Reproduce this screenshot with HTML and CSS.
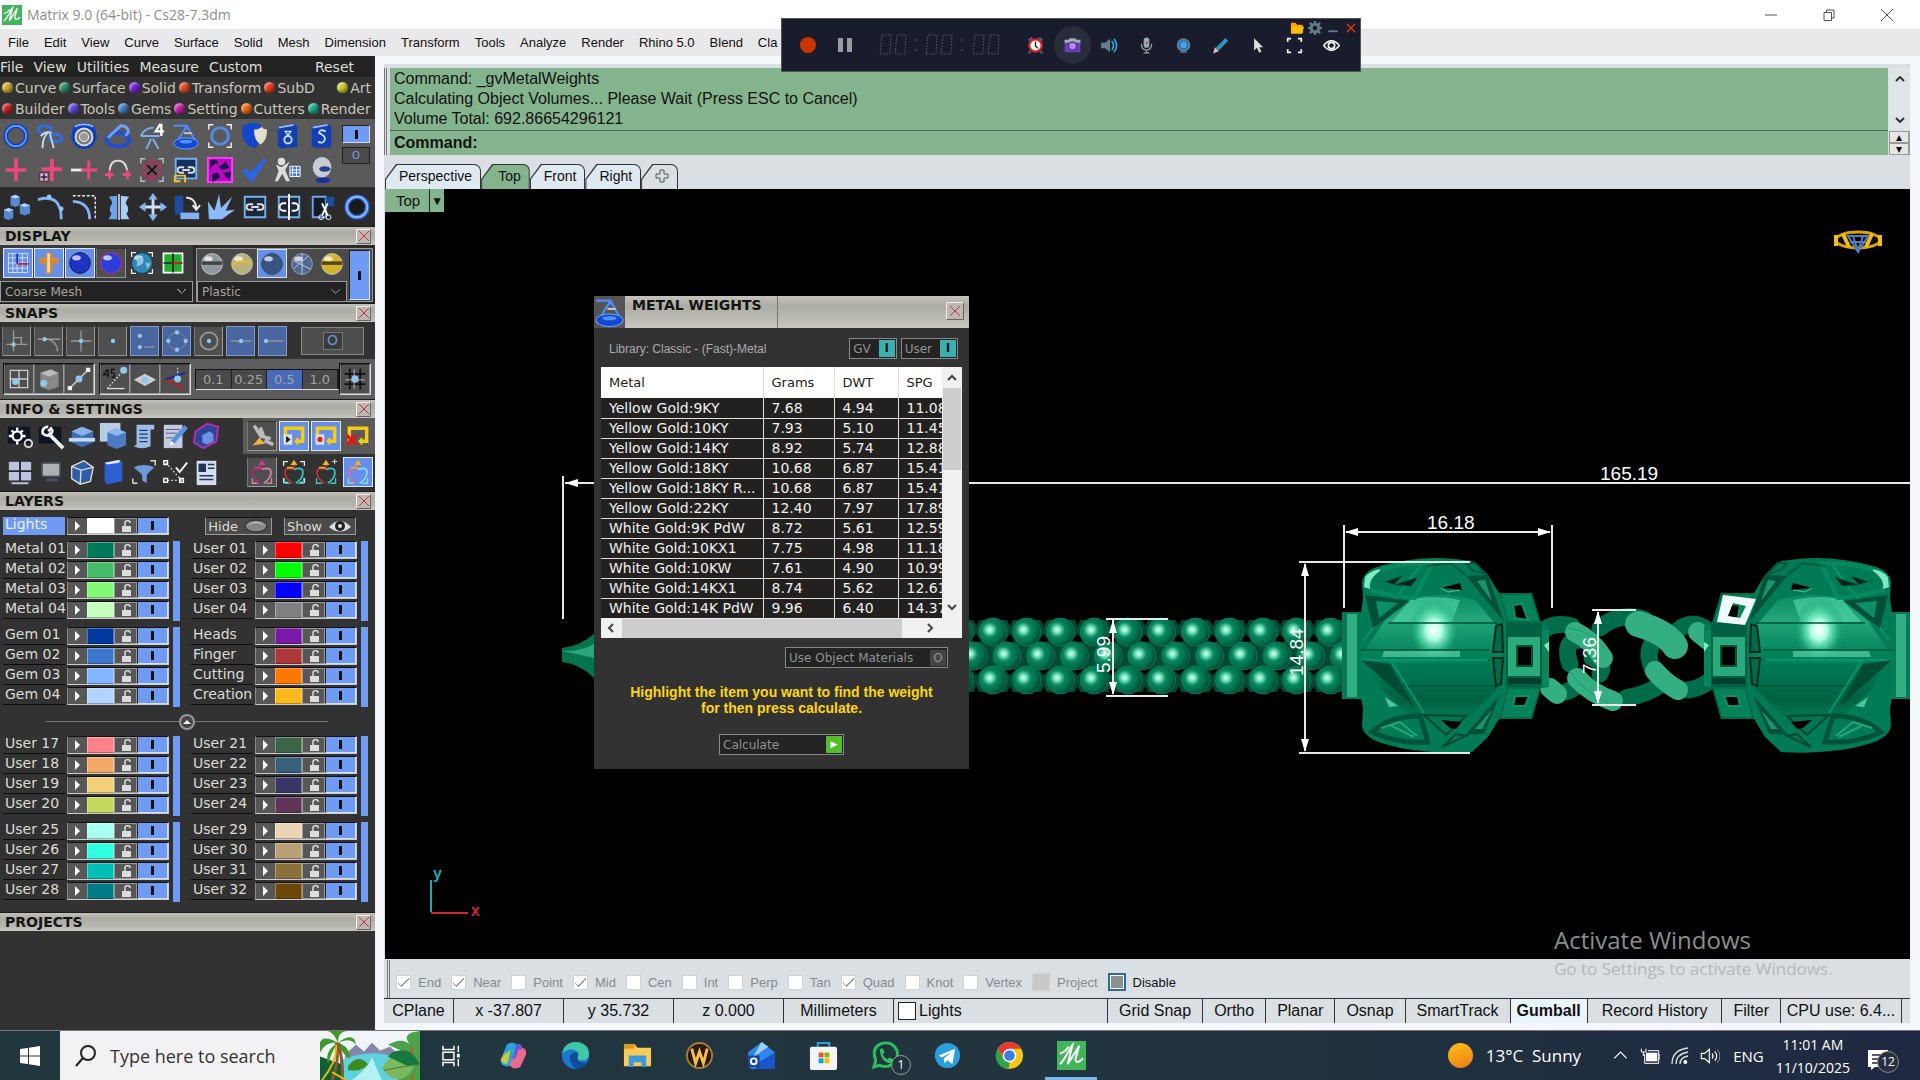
FILE: index.html
```html
<!DOCTYPE html>
<html lang="en">
<head>
    <meta charset="UTF-8">
    <meta name="viewport" content="width=device-width, initial-scale=1.0">
    <title>Matrix 9.0 (64-bit) - Cs28-7.3dm</title>
    <link rel="stylesheet" href="styles.css">
</head>
<body>
    <header class="titlebar">
        <span class="icon app-icon" data-icon="matrix"></span>
        <span class="title">Matrix 9.0 (64-bit) - Cs28-7.3dm</span>
        <div class="window-buttons">
            <button aria-label="Minimize"><svg viewBox="0 0 12 12"><path d="M0 6h12"/></svg></button>
            <button aria-label="Restore"><svg viewBox="0 0 12 12"><path d="M1 3.500h7.500v8H1zM3.500 3V1H11v8H9"/></svg></button>
            <button aria-label="Close"><svg viewBox="0 0 12 12"><path d="M0 0l12 12M12 0L0 12"/></svg></button>
        </div>
    </header>

    <nav class="menubar">
        <a href="#">File</a><a href="#">Edit</a><a href="#">View</a><a href="#">Curve</a><a href="#">Surface</a>
        <a href="#">Solid</a><a href="#">Mesh</a><a href="#">Dimension</a><a href="#">Transform</a><a href="#">Tools</a>
        <a href="#">Analyze</a><a href="#">Render</a><a href="#">Rhino 5.0</a><a href="#">Blend</a><a href="#">Cla</a>
    </nav>

    <!-- Screen recorder, floats over the menu bar -->
    <div class="recorder">
        <div class="rec-main">
            <button class="rec-dot" aria-label="Record"></button>
            <button class="rec-pause" aria-label="Pause"></button>
            <svg class="rec-time" viewBox="0 0 122 22" role="img" aria-label="00:00:00">
                <g fill="none" stroke="#4b4e5c" stroke-width="1" stroke-dasharray="2 1">
                    <path d="M3 1h9l-1 19H1zM18 1h9l-1 19H16zM49 1h9l-1 19H47zM64 1h9l-1 19H62zM96 1h9l-1 19H94zM111 1h9l-1 19h-10z"/>
                </g>
                <path d="M36 5h2v2h-2zM36 15h2v2h-2zM82 5h2v2h-2zM82 15h2v2h-2z" fill="#3a3d4c"/>
            </svg>
            <div class="rec-tools" data-icons="alarm camera speaker mic webcam pencil cursor frame eye"></div>
        </div>
        <div class="rec-corner" data-icons="folder gear minus cross"></div>
    </div>

    <div class="workspace">
        <aside class="sidebar">
            <nav class="side-menu">
                <a href="#">File</a><a href="#">View</a><a href="#">Utilities</a><a href="#">Measure</a><a href="#">Custom</a><a href="#" class="reset">Reset</a>
            </nav>
            <div class="categories" id="categories"></div>

            <div class="tools-top">
                <div class="tool-grid" data-icons="ring rings band swirl lines4 scale ringframe shield book bookS plus plusbox minusplus arch target linkbox pattern check person head"></div>
                <div class="stack">
                    <button class="on-switch" aria-label="On"></button>
                    <button class="off-switch" aria-label="Off">O</button>
                </div>
            </div>
            <div class="tools-dark" data-icons="cubes curvept offset mirror move rotate burst linkbox2 breaklink cut ring2"></div>

            <h2 class="panel-title">DISPLAY <button class="close" aria-label="Close display"></button></h2>
            <section class="display">
                <div class="display-left">
                    <div class="strip" data-icons="grid*on cross3d*on sphere*on sphereP*up sphereW gridG"></div>
                    <select aria-label="Mesh quality"><option>Coarse Mesh</option></select>
                </div>
                <div class="display-right">
                    <div>
                        <div class="strip" data-icons="ballS ballY ballB*on ballW ballG"></div>
                        <select aria-label="Material"><option>Plastic</option></select>
                    </div>
                    <button class="on-switch tall" aria-label="Material on"></button>
                </div>
            </section>

            <h2 class="panel-title">SNAPS <button class="close" aria-label="Close snaps"></button></h2>
            <section class="snaps">
                <div class="snap-row">
                    <div class="strip faded" data-icons="s1*up s2*up s3*up s4*up s5*on s6*on s7*up s8*on s9*on"></div>
                    <button class="snap-off" aria-label="Snaps off"><span>O</span></button>
                </div>
                <div class="snap-row gray">
                    <div class="strip sunk" data-icons="t1*up t2*up t3*up"></div>
                    <div class="strip sunk" data-icons="t4*up t5*up t6*up"></div>
                    <div class="steps"><button>0.1</button><button>0.25</button><button class="active">0.5</button><button>1.0</button></div>
                    <div class="strip sunk last" data-icons="hash*up"></div>
                </div>
            </section>

            <h2 class="panel-title">INFO &amp; SETTINGS <button class="close" aria-label="Close info"></button></h2>
            <section class="info">
                <div class="info-left" data-icons="gears wrench boxline boxdoc scroll notepad cubeP panes monitor cubeW bookB filter nodes report"></div>
                <div class="info-right">
                    <div class="strip lit" data-icons="brush*up play*on rec*on delx"></div>
                    <div class="strip" data-icons="gum1*up gum2 gum3 gum4*on"></div>
                </div>
            </section>

            <h2 class="panel-title">LAYERS <button class="close" aria-label="Close layers"></button></h2>
            <section class="layers">
                <div class="lights-row">
                    <div id="lights"></div>
                    <div class="hide-show">
                        <button>Hide <svg viewBox="0 0 24 14"><ellipse cx="12" cy="7" rx="11" ry="6" fill="#858585" stroke="#222"/><path d="M5 6q7-5 14 0" stroke="#ccc" fill="none"/></svg></button>
                        <button>Show <svg viewBox="0 0 24 14"><path d="M1 8Q12-4 23 8Q12 17 1 8z" fill="#ddd"/><circle cx="12" cy="7" r="5" fill="#222"/><circle cx="12" cy="7" r="2" fill="#ddd"/></svg></button>
                    </div>
                </div>
                <div class="layer-groups" id="layers-top"></div>
                <div class="layer-divider"><button aria-label="Collapse"></button></div>
                <div class="layer-groups" id="layers-bottom"></div>
            </section>

            <h2 class="panel-title">PROJECTS <button class="close" aria-label="Close projects"></button></h2>
        </aside>

        <main class="content">
            <section class="command">
                <div class="command-text">
                    <div class="history">
                        <p>Command: _gvMetalWeights</p>
                        <p>Calculating Object Volumes... Please Wait (Press ESC to Cancel)</p>
                        <p>Volume Total: 692.86654296121</p>
                    </div>
                    <label class="prompt"><b>Command:</b> <input type="text"></label>
                </div>
                <div class="command-scroll">
                    <div><svg viewBox="0 0 10 6"><path d="M1 5l4-4 4 4"/></svg><svg viewBox="0 0 10 6"><path d="M1 1l4 4 4-4"/></svg></div>
                    <div class="spin"><button aria-label="Up">▴</button><button aria-label="Down">▾</button></div>
                </div>
            </section>

            <nav class="tabs">
                <button>Perspective</button><button class="active">Top</button><button>Front</button><button>Right</button><button class="add" aria-label="Add viewport"><svg viewBox="0 0 14 14"><path d="M5 1h4v4h4v4H9v4H5V9H1V5h4z"/></svg></button>
            </nav>

            <section class="viewport">
                <svg class="scene" viewBox="385 189 1525 770" preserveAspectRatio="xMinYMin slice">
                    <defs>
                        <radialGradient id="bead" cx=".38" cy=".42" r=".64">
                            <stop offset="0" stop-color="#e2fff5"/><stop offset=".16" stop-color="#7eebc4"/>
                            <stop offset=".42" stop-color="#08865e"/><stop offset=".75" stop-color="#006b4a"/><stop offset="1" stop-color="#00402c"/>
                        </radialGradient>
                        <linearGradient id="ball" x1="0" x2="0" y1="0" y2="1">
                            <stop offset="0" stop-color="#0a8a61"/><stop offset=".2" stop-color="#25a57a"/><stop offset=".5" stop-color="#008059"/>
                            <stop offset=".85" stop-color="#006243"/><stop offset="1" stop-color="#007a54"/>
                        </linearGradient>
                        <radialGradient id="glow"><stop offset="0" stop-color="#fff"/><stop offset=".3" stop-color="#b4ffe6"/><stop offset=".6" stop-color="#4fd8a8" stop-opacity=".7"/><stop offset="1" stop-color="#008a5e" stop-opacity="0"/></radialGradient>
                        <g id="capsule">
                            <path d="M1361 613H1370V700H1361z" fill="#014b33"/>
                            <path d="M1363 598L1362 582Q1364 570 1380 566Q1420 555 1455 559L1472 561L1488 575L1499 593H1532L1541 623L1549 626V687L1541 688L1532 719H1499L1488 737L1472 752Q1420 755 1385 744Q1364 738 1362 726L1363 708L1361 698V613z" fill="#017b55"/>
                            <path d="M1410 599Q1440 590 1475 600L1499 628L1502 656L1497 690L1470 716Q1440 722 1410 716L1382 690L1361 656L1384 622z" fill="url(#ball)"/>
                            <path d="M1410 600Q1430 594 1460 600L1452 622H1392z" fill="#5be3b2" opacity=".55"/>
                            <ellipse cx="1434" cy="630" rx="26" ry="32" fill="url(#glow)"/>
                            <path d="M1384 651H1460V657H1382z" fill="#79eec6" opacity=".5"/>
                            <g fill="none" stroke="#00543a" stroke-width="1.500">
                                <path d="M1361 650H1490M1361 660H1490M1388 623H1497M1390 686H1496"/>
                            </g>
                            <path d="M1361 660H1488L1391 661L1424 713M1424 561L1364 640" fill="none" stroke="#07946a" stroke-width="2"/>
                            <path d="M1361 660L1390 664L1414 707z" fill="#014a34"/>
                            <path d="M1365 595L1410 601L1373 628z" fill="#014f38"/><path d="M1376 601L1398 603L1379 618z" fill="#0a8f66"/>
                            <path d="M1379 580L1384 582 1402 576 1394 585 1418 577 1411 586 1396 585z" fill="#00271b"/>
                            <path d="M1365 577Q1372 569 1383 569Q1368 578 1370 589L1364 587z" fill="#7cebc4"/>
                            <path d="M1380 570Q1406 562 1432 564L1415 598Q1390 596 1370 590" fill="none" stroke="#05895f" stroke-width="4"/>
                            <path d="M1466 576L1488 575L1504 622L1495 611z" fill="#015239"/><path d="M1477 581L1485 580 1492 601z" fill="#17966e"/>
                            <path d="M1441 588L1460 583 1462 590z" fill="#000"/><path d="M1441 588L1448 592 1460 590" stroke="#47c79c" fill="none"/>
                            <path d="M1427 566L1450 563 1466 575M1466 563L1475 563 1486 574 1472 570z" stroke="#01583e" fill="none" stroke-width="2"/>
                            <path d="M1496 626L1502 624 1503 652 1493 652zM1493 658L1503 658 1501 684 1496 686z" fill="#02694a" stroke="#002b1d" stroke-width="2"/>
                            <path d="M1372 732Q1390 716 1420 716L1428 742Q1397 744 1372 732z" fill="none" stroke="#015239" stroke-width="5"/>
                            <path d="M1381 728L1400 722L1417 736M1390 725L1414 737" stroke="#20a67a" fill="none" stroke-width="2"/>
                            <path d="M1424 715L1466 716L1446 735zM1442 747L1456 734 1466 736z" fill="#027552" stroke="#00482f" stroke-width="2"/>
                            <path d="M1441 720L1462 722 1456 729 1450 728z" fill="#000"/>
                            <path d="M1500 695L1465 735L1484 734z" fill="#015239"/><path d="M1492 710L1475 729L1482 729z" fill="#17966e"/>
                            <path d="M1385 697L1389 707L1398 706z" fill="#48c99c"/>
                            <path d="M1500 594H1531L1540 622H1508zM1508 688H1540L1531 718H1500z" fill="#058259" stroke="#015b40"/>
                            <path d="M1513 605L1522 604 1528 620 1515 618zM1515 696L1529 696 1525 706 1513 706z" fill="#000" stroke="#0a9068" stroke-width="2"/>
                            <path d="M1506 623H1542V687H1506z" fill="#026143"/><path d="M1508 637H1540V676H1508z" fill="#2aa97c"/>
                            <path d="M1517 646H1532V666H1517z" fill="#000" stroke="#015239" stroke-width="2"/>
                            <path d="M1542 630H1549V686H1542z" fill="#07865d"/><path d="M1544 645L1549 642V652z" fill="#79eec6"/>
                            <path d="M1508 678H1541V684H1508z" fill="#00402c"/>
                            <path d="M1342 612H1361V699H1342z" fill="#057a55"/><path d="M1347 614H1357V697H1347z" fill="#32b083"/>
                        </g>
                        <g id="arrow"><path d="M0 0L-4 13H4z" fill="#fff"/></g>
                    </defs>

                    <!-- Bracelet -->
                    <path d="M562 648Q580 646 594 634V678Q580 664 562 662z" fill="#04744f"/>
                    <path d="M562 651Q580 652 594 644V658z" fill="#2ba67c"/>
                    <g id="beads"></g>
                    <g fill="none" stroke-linecap="round">
                        <path d="M1545 629Q1556 622 1572 626M1600 628Q1618 612 1644 619M1570 664Q1562 640 1580 640M1652 668Q1644 648 1658 638M1674 634Q1688 618 1705 628M1626 698Q1650 694 1664 682M1592 658Q1606 664 1600 674M1688 690Q1700 688 1708 682M1566 692Q1572 690 1576 686" stroke="#006c4a" stroke-width="17"/>
                        <path d="M1575 632Q1592 640 1603 658M1577 678Q1592 694 1613 701M1655 671Q1664 682 1678 690M1698 632L1708 640M1550 688L1557 694" stroke="#33af82" stroke-width="20"/>
                        <path d="M1638 624Q1666 632 1675 646" stroke="#33af82" stroke-width="26"/>
                        <path d="M1568 628Q1590 630 1604 648M1570 672Q1584 692 1608 703" stroke="#1d9c70" stroke-width="1"/>
                    </g>
                    <use href="#capsule"/>
                    <use href="#capsule" transform="translate(3253 0) scale(-1 1)"/>
                    <path d="M1723 595L1756 599 1745 625 1717 622zM1733 603L1728 616 1740 618 1746 606z" fill="#effffa" fill-rule="evenodd"/>

                    <!-- Dimensions -->
                    <g stroke="#e8e8e8" stroke-width="2" fill="none">
                        <path d="M563 476V619M565 483H1910M1344 525V608M1552 525V608M1346 532H1550M1299 562H1470M1299 753H1470M1305 564V751M1106 619H1168M1106 696H1168M1113 620V694M1592 610H1636M1592 705H1636M1598 612V703"/>
                    </g>
                    <use href="#arrow" transform="translate(565 483) rotate(-90)"/>
                    <use href="#arrow" transform="translate(1345 532) rotate(-90)"/>
                    <use href="#arrow" transform="translate(1551 532) rotate(90)"/>
                    <use href="#arrow" transform="translate(1305 563)"/><use href="#arrow" transform="translate(1305 752) rotate(180)"/>
                    <use href="#arrow" transform="translate(1113 620)"/><use href="#arrow" transform="translate(1113 695) rotate(180)"/>
                    <use href="#arrow" transform="translate(1598 611)"/><use href="#arrow" transform="translate(1598 704) rotate(180)"/>
                    <g class="dims">
                        <text x="1600" y="480">165.19</text>
                        <text x="1427" y="529">16.18</text>
                        <text transform="translate(1110 673) rotate(-90)">5.99</text>
                        <text transform="translate(1303 676) rotate(-90)">14.84</text>
                        <text transform="translate(1596 674) rotate(-90)">7.36</text>
                    </g>

                    <!-- World axes -->
                    <path d="M431 880V912" stroke="#1fa7b5" stroke-width="2"/><path d="M431 913H468" stroke="#c92a2a" stroke-width="2"/>
                    <text class="axis" x="433" y="879" fill="#1fa7b5">y</text>
                    <text class="axis" x="471" y="916" fill="#c92a2a">x</text>

                    <!-- Ring finger gizmo -->
                    <g fill="none" stroke-width="3">
                        <ellipse cx="1858" cy="240" rx="22" ry="8" stroke="#d9a400"/>
                        <path d="M1836 235v11M1880 235v11M1843 234l6 13M1872 234l-6 13" stroke="#f2bd12" stroke-width="4"/>
                        <path d="M1848 236h20l-10 16zM1853 236l5 15 5-15M1850 242h16" stroke="#4f7dbd" stroke-width="2"/>
                    </g>
                </svg>

                <div class="view-tag"><button>Top</button><button aria-label="View menu">▼</button></div>

                <div class="dialog" role="dialog" aria-labelledby="dlg-title">
                    <div class="dialog-head">
                        <span class="icon" data-icon="scale"></span>
                        <h1 id="dlg-title">METAL WEIGHTS</h1>
                        <button class="close" aria-label="Close"></button>
                    </div>
                    <div class="dialog-lib">
                        <span>Library: Classic - (Fast)-Metal</span>
                        <button class="flag">GV <i>I</i></button>
                        <button class="flag">User <i>I</i></button>
                    </div>
                    <div class="table-box">
                        <div class="table-clip">
                            <table>
                                <thead><tr><th>Metal</th><th>Grams</th><th>DWT</th><th>SPG</th></tr></thead>
                                <tbody id="metals"></tbody>
                            </table>
                        </div>
                        <div class="vscroll"><svg viewBox="0 0 10 6"><path d="M1 5l4-4 4 4"/></svg><div class="thumb"></div><svg viewBox="0 0 10 6"><path d="M1 1l4 4 4-4"/></svg></div>
                        <div class="hscroll"><svg viewBox="0 0 6 10"><path d="M5 1L1 5l4 4"/></svg><div class="thumb"></div><svg viewBox="0 0 6 10"><path d="M1 1l4 4-4 4"/></svg></div>
                    </div>
                    <button class="field-btn materials">Use Object Materials <i>O</i></button>
                    <p class="hint">Highlight the item you want to find the weight<br>for then press calculate.</p>
                    <button class="field-btn calculate">Calculate <i>▶</i></button>
                </div>
            </section>

            <section class="osnap" id="osnap"></section>

            <footer class="status">
                <span class="c1">CPlane</span><span class="c2">x -37.807</span><span class="c2">y 35.732</span><span class="c2">z 0.000</span><span class="c2">Millimeters</span>
                <span class="current-layer"><i></i>Lights</span>
                <button>Grid Snap</button><button>Ortho</button><button>Planar</button><button>Osnap</button><button>SmartTrack</button><button class="active">Gumball</button><button class="wide">Record History</button><button>Filter</button><span class="cpu">CPU use: 6.4...</span>
            </footer>
        </main>
    </div>

    <div class="watermark">
        <p>Activate Windows</p>
        <p>Go to Settings to activate Windows.</p>
    </div>

    <footer class="taskbar">
        <button class="start" aria-label="Start"><svg viewBox="0 0 20 20"><path d="M0 3l8-1v7.500H0zM9 1.800L20 0v9.500H9zM0 10.500h8V18l-8-1zM9 10.500h11V20L9 18.200z"/></svg></button>
        <label class="search">
            <svg viewBox="0 0 22 22"><circle cx="13" cy="8" r="7"/><path d="M8 13l-7 8"/></svg>
            <input type="text" placeholder="Type here to search" aria-label="Search">
            <svg class="scenery" viewBox="0 0 100 50" preserveAspectRatio="none">
                <rect width="100" height="50" fill="#f1f5fb"/>
                <path d="M25 24L36 14 44 21 52 12 60 20 70 16 80 25V30H25z" fill="#8587a8"/>
                <path d="M20 50V30Q50 18 72 26Q60 36 80 50z" fill="#5fd0dd"/><path d="M32 50Q50 36 52 26Q56 38 62 50z" fill="#b5f0f2"/>
                <path d="M28 36Q38 22 48 34Q42 42 28 40z" fill="#3d8a1d"/><path d="M0 50V26L22 34 24 50z" fill="#0f6035"/>
                <path d="M18 12Q-4 0 0 22Q6 10 18 12Q4 20 8 34Q12 20 18 12Q22 24 30 28Q30 16 18 12Q30 6 36 14Q34 0 18 12Q18 0 28 0H8Q14 2 18 12z" fill="#3f9a2c"/>
                <path d="M16 12Q20 30 12 50M18 12Q24 34 22 50" stroke="#8b5a2b" stroke-width="3" fill="none"/><path d="M2 50Q18 30 16 14M12 42L26 50" stroke="#e8b80c" stroke-width="2" fill="none"/>
                <path d="M100 0V50H78L90 24 68 14Q82 6 90 14Q80 2 100 0z" fill="#4ba24a"/><path d="M62 38Q70 22 90 28Q100 36 84 48Q70 52 62 38z" fill="#7cb85c"/>
                <path d="M68 26Q76 16 92 22L100 34 88 36z" fill="#17793f"/><path d="M64 40L96 34" stroke="#3d7a2c" fill="none"/><path d="M92 16V24M92 44V50" stroke="#c4572a" stroke-width="2"/>
            </svg>
        </label>
        <div class="apps" data-icons="taskview copilot edge explorer wow outlook store whatsapp telegram chrome matrix*running"></div>
        <div class="weather"><span class="sun"></span>13°C&nbsp; Sunny</div>
        <div class="tray" data-icons="up battery wifi volume"></div>
        <span class="lang">ENG</span>
        <div class="clock"><span>11:01 AM</span><span>11/10/2025</span></div>
        <button class="notify" aria-label="Notifications"><svg viewBox="0 0 20 20"><path d="M0 0h20v17H7l-4 3v-3H0z" fill="#fff"/><path d="M4 5h12M4 9h12M4 13h7" stroke="#1f2b42" stroke-width="1.500"/></svg><span>12</span></button>
    </footer>

    <script src="script.js"></script>
</body>
</html>
```

FILE: styles.css
```css
/* Global */
* {
    box-sizing: border-box;
}

body {
    margin: 0;
    min-height: 100vh;
    display: flex;
    flex-direction: column;
    font-family: "Liberation Sans", Arial, sans-serif;
    font-size: 13px;
    color: #111;
    background: #f4f6fb;
    overflow: hidden;
    position: relative;
}

button, input, select {
    font: inherit;
    color: inherit;
    background: none;
    border: 0;
    padding: 0;
    margin: 0;
}

a {
    color: inherit;
    text-decoration: none;
}

p, h1, h2 {
    margin: 0;
}

svg {
    display: block;
}

i {
    font-style: normal;
}

.tool {
    display: grid;
    place-items: center;
}

.tool svg {
    width: 28px;
    height: 28px;
}

/* Title and menu */
.titlebar {
    height: 29px;
    display: flex;
    align-items: center;
    background: #fff;
    padding-left: 2px;
}

.app-icon svg {
    width: 20px;
    height: 20px;
}

.title {
    margin-left: 5px;
    font: 14px "Open Sans", sans-serif;
    color: #8e8e8e;
}

.window-buttons {
    margin-left: auto;
    display: flex;
    padding-right: 4px;
}

.window-buttons button {
    width: 58px;
    height: 28px;
    display: grid;
    place-items: center;
}

.window-buttons svg {
    width: 12px;
    height: 12px;
    fill: none;
    stroke: #555;
}

.menubar {
    height: 27px;
    background: #e9e8ea;
    display: flex;
    align-items: center;
    gap: 15px;
    padding-left: 8px;
}

/* Recorder */
.recorder {
    position: absolute;
    left: 781px;
    top: 18px;
    width: 580px;
    height: 54px;
    background: #181c2c;
    border: 1px solid #555;
}

.rec-main {
    display: flex;
    align-items: center;
    height: 100%;
    padding-left: 18px;
}

.rec-dot {
    width: 16px;
    height: 16px;
    border-radius: 8px;
    background: #cc3300;
}

.rec-pause {
    width: 14px;
    height: 14px;
    border: solid #999ba0;
    border-width: 0 5px;
    margin-left: 22px;
}

.rec-time {
    width: 122px;
    height: 22px;
    margin-left: 27px;
}

.rec-tools {
    display: flex;
    margin-left: 16px;
}

.rec-tools .tool {
    width: 37px;
    height: 38px;
}

.rec-tools .tool:nth-child(2) {
    background: #282d3a;
    border-radius: 19px;
}

.rec-tools svg {
    width: 17px;
    height: 17px;
}

.rec-corner {
    position: absolute;
    right: 0;
    top: 0;
    display: flex;
}

.rec-corner .tool {
    width: 18px;
    height: 17px;
}

.rec-corner svg {
    width: 14px;
    height: 14px;
}

/* Layout */
.workspace {
    flex: 1;
    display: flex;
}

.sidebar {
    width: 375px;
    flex: none;
    background: #333233;
    color: #dcdcd4;
    font: 14px "DejaVu Sans", Verdana, sans-serif;
}

.content {
    flex: 1;
    min-width: 0;
    margin: 8px 10px 7px 9px;
    background: #d9dfe2;
    display: flex;
    flex-direction: column;
}

/* Sidebar top */
.side-menu {
    height: 21px;
    background: #242323;
    display: flex;
    align-items: center;
    gap: 10px;
}

.side-menu .reset {
    margin: 0 21px 0 auto;
}

.cat-row {
    height: 21px;
    display: flex;
    align-items: center;
    gap: 3px;
    padding-left: 2px;
    overflow: hidden;
    color: #c9c6b8;
}

.cat {
    display: flex;
    align-items: center;
    gap: 2px;
}

.cat.end {
    margin: 0 4px 0 auto;
}

.dot {
    width: 11px;
    height: 11px;
    border-radius: 50%;
    box-shadow: inset -2px -2px 3px #0006, inset 2px 2px 2px #fff6;
}

.tools-top {
    display: flex;
    background: #5a5a5a;
}

.tool-grid {
    display: grid;
    grid-template-columns: repeat(10, 34px);
}

.tools-top .tool,
.tools-dark .tool {
    width: 34px;
    height: 34px;
}

.tools-top .tool {
    width: 32px;
}

.tools-dark {
    display: flex;
    align-items: center;
    height: 39px;
    background: #2b2b2b;
}

.stack {
    padding: 6px 2px;
    display: grid;
    gap: 4px;
    align-content: start;
}

.on-switch {
    width: 28px;
    height: 18px;
    background: linear-gradient(#111, #111) center / 3px 9px no-repeat #6f9bf5;
    border: 1px solid #cfe0ff;
    border-left-color: #222;
    border-top-color: #222;
}

.off-switch {
    width: 28px;
    height: 17px;
    background: #4b4b4b;
    border: 1px solid #222;
    color: #7f9fe0;
    font-size: 10px;
    line-height: 14px;
}

/* Panels */
.panel-title {
    height: 19px;
    border-top: 1px solid #1b1b1b;
    background: linear-gradient(#c2c2bb, #acaca3 30%, #b5b5ad 70%, #c6c6be);
    color: #141414;
    font-size: 14px;
    line-height: 18px;
    font-weight: bold;
    padding: 0 4px 0 5px;
    display: flex;
    justify-content: space-between;
    align-items: center;
}

.close {
    width: 15px;
    height: 15px;
    border: 1px solid #eee;
    border-right-color: #666;
    border-bottom-color: #666;
    background:
        linear-gradient(45deg, transparent 46%, #c8343c 46% 54%, transparent 54%) center / 10px 10px no-repeat,
        linear-gradient(-45deg, transparent 46%, #c8343c 46% 54%, transparent 54%) center / 10px 10px no-repeat,
        #bdb9b2;
}

.strip {
    display: flex;
}

.strip .tool {
    width: 30px;
    height: 30px;
    border: 1px solid transparent;
}

.strip .up {
    background: #4f4f4f;
    border-color: #333 #999 #999 #777;
}

.strip .on {
    background: #6690e8;
    border-color: #dbe7ff;
}

.strip svg {
    width: 26px;
    height: 26px;
}

.display {
    height: 58px;
    display: flex;
    gap: 3px;
    background: #2a2a2a;
}

.display-left {
    width: 193px;
    padding-top: 3px;
    background: #3a3a3a;
}

.display-left .strip {
    gap: 1px;
    padding-left: 3px;
}

.display select {
    appearance: none;
    width: 100%;
    height: 21px;
    margin-top: 3px;
    padding-left: 4px;
    font-size: 12px;
    color: #a5a5a0;
    border: 1px solid #999;
    background: linear-gradient(45deg, transparent 45%, #888 45% 60%, transparent 60%) right 10px center / 5px 5px no-repeat,
        linear-gradient(-45deg, transparent 45%, #888 45% 60%, transparent 60%) right 6px center / 5px 5px no-repeat, #222;
}

.display-right {
    width: 177px;
    display: flex;
    margin: 3px 0 1px;
    border: 1px solid #999;
    background: #4a4a4a;
}

.display-right .strip .tool {
    height: 29px;
}

.on-switch.tall {
    width: 22px;
    height: 50px;
    margin: 1px 2px;
}

.snap-row {
    display: flex;
    height: 37px;
    align-items: center;
    padding-left: 2px;
}

.snap-row.gray {
    height: 40px;
    background: #5e5e5e;
    padding: 0 4px 0 3px;
}

.faded {
    gap: 3px;
}

.faded .tool {
    width: 29px;
}

.faded .on {
    background: #4a66a0;
    border-color: #8199c8;
}

.snap-off {
    width: 63px;
    height: 28px;
    margin-left: 14px;
    background: #4d4d4d;
    border: 1px solid #888;
}

.snap-off span {
    display: inline-block;
    width: 20px;
    height: 18px;
    line-height: 15px;
    border: 1px solid #777;
    background: #3c3c3c;
    color: #6f8fd8;
}

.sunk {
    border: 1px solid #111;
    border-color: #111 #ddd #ddd #111;
    margin-right: 4px;
}

.sunk.last {
    margin: 0;
}

.steps {
    flex: 1;
    display: flex;
    border: 1px solid #111;
    border-bottom-color: #ddd;
}

.steps button {
    flex: 1;
    height: 19px;
    font-size: 13px;
    color: #a3a3a3;
    background: #494949;
    border-right: 1px solid #222;
}

.steps .active {
    background: #476bb8;
}

.info {
    display: flex;
    justify-content: space-between;
    height: 73px;
}

.info-left {
    display: grid;
    grid-template-columns: repeat(7, 31px);
    grid-auto-rows: 36px;
    padding-left: 4px;
}

.info-right .strip {
    height: 36px;
    align-items: center;
    padding: 0 2px 0 4px;
    gap: 2px;
}

.info-right .lit {
    background: #5a5a5a;
}

/* Layers */
.layers {
    padding: 7px 8px 10px 3px;
}

.lights-row {
    display: flex;
    justify-content: space-between;
    height: 24px;
}

.hide-show {
    display: flex;
    gap: 12px;
    padding-right: 11px;
    font-size: 13px;
}

.hide-show button {
    display: flex;
    align-items: center;
    gap: 6px;
    height: 18px;
    padding: 0 3px 0 2px;
    background: #4b4b4b;
    border: 1px solid #999;
    border-top-color: #111;
}

.hide-show svg {
    width: 24px;
    height: 14px;
}

.layer-groups {
    display: grid;
    grid-template-columns: 177px 177px;
    gap: 6px 11px;
}

.layer-group {
    border-right: 7px solid #6f9bf5;
    padding-right: 4px;
}

.layer {
    height: 20px;
    display: flex;
    gap: 2px;
}

.layer-name {
    width: 62px;
    height: 18px;
    line-height: 15px;
    padding-left: 2px;
    border-bottom: 1px solid #0c0c0c;
    white-space: nowrap;
}

.layer-name.selected {
    background: #6f9bf5;
    border: 0;
    color: #e8f0ff;
}

.layer-controls {
    display: flex;
    width: 102px;
    height: 18px;
    border: 1px solid #111;
    border-color: #111 #ccc #ccc #888;
}

.layer-controls .go {
    width: 19px;
    background: #575757;
    display: grid;
    place-items: center;
}

.go::before {
    content: "";
    border-left: 5px solid #fff;
    border-top: 5px solid transparent;
    border-bottom: 5px solid transparent;
}

.swatch {
    width: 27px;
    border: 1px solid #fff5;
    border-bottom-color: #0004;
}

.lock {
    width: 23px;
    background: #575757;
    border: 1px solid #999;
    display: grid;
    place-items: center;
}

.lock svg {
    width: 12px;
    height: 12px;
}

.layer-controls .on-switch {
    flex: 1;
    height: 16px;
    border-top: 0;
}

.layer-divider {
    height: 29px;
    margin: 0 39px 0 43px;
    display: grid;
    place-items: center;
    background: linear-gradient(#777, #777) center / 100% 1px no-repeat;
}

.layer-divider button {
    width: 16px;
    height: 16px;
    border: 2px solid #999;
    border-radius: 8px;
    background: #444;
    display: grid;
    place-items: center;
}

.layer-divider button::before {
    content: "";
    border-bottom: 4px solid #fff;
    border-left: 4px solid transparent;
    border-right: 4px solid transparent;
}

/* Command line */
.command {
    display: flex;
    margin-top: 4px;
    padding-left: 3px;
    border-left: 3px double #777;
    gap: 1px;
    font-size: 16px;
}

.command-text {
    flex: 1;
    background: #84b48e;
}

.history {
    height: 63px;
    padding: 1px 4px;
    border-bottom: 1px solid #4a6650;
    line-height: 20px;
}

.prompt {
    display: flex;
    height: 24px;
    align-items: center;
    padding-left: 4px;
}

.prompt input {
    flex: 1;
}

.command-scroll {
    width: 21px;
    background: #84b48e;
}

.command-scroll > div:first-child {
    height: 63px;
    display: flex;
    flex-direction: column;
    justify-content: space-between;
    align-items: center;
    padding: 8px 0;
    background: #dfe5e6;
}

.command-scroll svg {
    width: 10px;
    height: 6px;
    fill: none;
    stroke: #333;
    stroke-width: 2px;
}

.spin button {
    display: block;
    width: 20px;
    height: 12px;
    line-height: 8px;
    font-size: 12px;
    background: #e6e6e6;
    border: 1px solid #999;
}

.tabs {
    display: flex;
    height: 34px;
    align-items: flex-end;
    padding-left: 1px;
    font-size: 14px;
}

.tabs button {
    position: relative;
    z-index: 0;
    height: 25px;
    padding: 0 9px 2px 14px;
    background: #333;
    border-radius: 0 7px 0 0;
    clip-path: polygon(11px 0, 100% 0, 100% 100%, 0 100%, 0 60%);
}

.tabs button::before {
    content: "";
    position: absolute;
    z-index: -1;
    inset: 1px 1px 0 1px;
    background: #dfe9f2;
    border-radius: 0 6px 0 0;
    clip-path: polygon(11px 0, 100% 0, 100% 100%, 0 100%, 0 60%);
}

.tabs .active {
    padding-left: 17px;
}

.tabs .active::before {
    background: #84b48e;
}

.tabs .add::before {
    background: #d9dfe2;
}

.tabs svg {
    width: 14px;
    height: 14px;
    fill: none;
    stroke: #555;
}

/* Viewport */
.viewport {
    flex: 1;
    position: relative;
    background: #000;
    margin-left: 1px;
    overflow: hidden;
}

.scene {
    position: absolute;
    inset: 0;
    width: 100%;
    height: 100%;
}

.dims text {
    font: 19px "Liberation Sans", sans-serif;
    fill: #fff;
}

.axis {
    font: bold 16px "Liberation Sans", sans-serif;
}

.view-tag {
    position: absolute;
    left: 0;
    top: 0;
    display: flex;
    height: 23px;
    background: #84b48e;
    font-size: 15px;
}

.view-tag button {
    padding: 0 9px 0 11px;
}

.view-tag button + button {
    padding: 0 1px;
    font-size: 12px;
    border-left: 1px solid #222;
}

/* Dialog */
.dialog {
    position: absolute;
    left: 209px;
    top: 107px;
    width: 375px;
    height: 473px;
    background: #333233;
    color: #aaa;
    font: 12px "DejaVu Sans", Verdana, sans-serif;
    display: flex;
    flex-direction: column;
}

.dialog-head {
    height: 32px;
    display: flex;
    align-items: center;
    background: linear-gradient(#c4c4bc, #acaca3 30%, #c6c6be);
}

.dialog-head .icon {
    background: #555;
}

.dialog-head .icon svg {
    width: 31px;
    height: 32px;
}

.dialog-head h1 {
    align-self: stretch;
    width: 153px;
    padding-left: 7px;
    font-size: 14px;
    line-height: 18px;
    color: #141414;
    border-right: 1px solid #777;
}

.dialog-head .close {
    width: 18px;
    height: 18px;
    margin: 0 5px 3px auto;
}

.dialog-lib {
    display: flex;
    align-items: center;
    gap: 4px;
    padding: 10px 11px 8px 15px;
}

.dialog-lib span {
    flex: 1;
    font-family: "Liberation Sans", Arial, sans-serif;
}

.flag, .field-btn {
    height: 21px;
    display: flex;
    align-items: center;
    justify-content: space-between;
    gap: 8px;
    padding: 0 1px 0 3px;
    border: 1px solid #888;
    background: #232323;
    color: #929292;
}

.flag i {
    width: 16px;
    line-height: 17px;
    font-weight: bold;
    background: #3bb0b0;
    color: #111;
}

.table-box {
    margin: 0 7px;
    display: grid;
    grid-template-columns: 1fr 20px;
    grid-template-rows: 251px 20px;
    background: #f0f0f0;
}

.table-clip {
    overflow: hidden;
}

table {
    width: 366px;
    table-layout: fixed;
    border-collapse: collapse;
    font-size: 14px;
    color: #f0f0f0;
}

th {
    height: 31px;
    padding: 0 0 0 8px;
    font-size: 13px;
    text-align: left;
    font-weight: normal;
    background: #fff;
    color: #222;
    border-right: 1px solid #ddd;
}

th:nth-child(1) { width: 162px; }
th:nth-child(2) { width: 71px; }
th:nth-child(3) { width: 64px; }

td {
    height: 20px;
    padding: 0 0 0 8px;
    background: #222120;
    border: solid #e0e0e0;
    border-width: 0 1px 1px 0;
    white-space: nowrap;
}

.table-box svg {
    width: 10px;
    height: 10px;
    fill: none;
    stroke: #444;
    stroke-width: 2px;
}

.vscroll {
    display: flex;
    flex-direction: column;
    align-items: center;
    padding: 6px 1px;
}

.vscroll .thumb {
    width: 18px;
    height: 82px;
    margin: 5px 0 auto;
    background: #cdcdcd;
}

.hscroll {
    grid-column: span 2;
    display: flex;
    align-items: center;
    padding: 0 27px 0 5px;
}

.hscroll .thumb {
    width: 280px;
    height: 19px;
    margin: 0 auto 0 6px;
    background: #cdcdcd;
}

.field-btn i {
    width: 16px;
    line-height: 17px;
    text-align: center;
}

.materials {
    width: 163px;
    margin: 9px 21px 0 auto;
}

.materials i {
    background: #444;
    line-height: 16px;
}

.hint {
    margin: 16px 20px 0;
    text-align: center;
    font: bold 14px/16px "Liberation Sans", Arial, sans-serif;
    color: #ffd800;
}

.calculate {
    width: 125px;
    margin: 18px auto 0 125px;
}

.calculate i {
    background: #53bd2b;
    color: #fff;
    font-size: 9px;
}

/* Osnap and status */
.osnap {
    height: 38px;
    display: flex;
    align-items: center;
    gap: 10px;
    margin: 1px 0 0 3px;
    padding: 6px 0 0 6px;
    border-left: 3px double #777;
    font-size: 13px;
    color: #858a8d;
}

.osnap label {
    display: flex;
    align-items: center;
    gap: 7px;
}

.osnap input {
    appearance: none;
    width: 15px;
    height: 15px;
    background: #fff;
    border: 1px solid #cfd3d5;
}

.osnap input:checked {
    background:
        linear-gradient(135deg, transparent 44%, #999 44% 56%, transparent 56%) right 1px center / 8px 11px no-repeat,
        linear-gradient(45deg, transparent 40%, #999 40% 60%, transparent 60%) 1px 7px / 4px 4px no-repeat, #fff;
}

.osnap .project input {
    background: #c8c8c8;
    width: 18px;
    height: 18px;
}

.osnap .disable {
    color: #111;
}

.osnap .disable input {
    background: #8b9092;
    border: 2px solid #2c6aa0;
    box-shadow: inset 0 0 0 1px #fff;
    width: 18px;
    height: 18px;
}

.status {
    display: flex;
    height: 25px;
    border-top: 1px solid #333;
    font-size: 16px;
}

.status > * {
    display: flex;
    align-items: center;
    justify-content: center;
    border-right: 1px solid #333;
    padding: 0 11px;
    white-space: nowrap;
}

.status .c1 {
    width: 70px;
}

.status .c2 {
    width: 110px;
}

.status .current-layer {
    flex: 1;
    justify-content: flex-start;
    gap: 3px;
    padding: 0 4px;
}

.current-layer i {
    width: 18px;
    height: 18px;
    background: #fff;
    border: 1px solid #222;
}

.status .active {
    background: #eaf4fb;
    font-weight: bold;
    padding: 0 6px;
}

.status .wide {
    padding: 0 14px;
}

.status .cpu {
    width: 121px;
    padding: 0 4px;
    margin-right: 8px;
}

.watermark {
    position: absolute;
    left: 1554px;
    top: 923px;
    color: #8b8e8f;
    font: 17px "Open Sans", sans-serif;
}

.watermark p:first-child {
    font-size: 24px;
    line-height: 34px;
}

.watermark p + p {
    color: #b3b8ba;
}

/* Taskbar */
.taskbar {
    height: 50px;
    display: flex;
    align-items: center;
    background: linear-gradient(90deg, #21363d, #22353f 55%, #1f2942);
    color: #fff;
    font: 17px "Open Sans", sans-serif;
    border-top: 1px solid #777;
}

.start {
    width: 60px;
    display: grid;
    place-items: center;
}

.start svg {
    width: 20px;
    height: 20px;
    fill: #fff;
}

.search {
    width: 360px;
    height: 49px;
    display: flex;
    align-items: center;
    gap: 13px;
    padding-left: 15px;
    background: #f2f2f4;
    color: #333;
    font-size: 18px;
}

.search svg:first-child {
    width: 22px;
    height: 22px;
    fill: none;
    stroke: #222;
    stroke-width: 2px;
}

.search input {
    flex: 1;
    min-width: 0;
}

.search input::placeholder {
    color: #333;
    opacity: 1;
}

.search .scenery {
    width: 100px;
    height: 49px;
}

.apps {
    display: flex;
}

.apps .tool {
    width: 62px;
    height: 49px;
    position: relative;
}

.apps svg {
    width: 29px;
    height: 29px;
}

.apps .tool:first-child svg {
    width: 22px;
    height: 22px;
}

.apps .running {
    background: linear-gradient(#76b9ed, #76b9ed) center bottom / 52px 3px no-repeat;
}

.badge {
    position: absolute;
    left: 37px;
    top: 24px;
    width: 20px;
    height: 20px;
    border: 1px solid #999;
    border-radius: 10px;
    background: #22353f;
    font-size: 12px;
    line-height: 18px;
}

.weather {
    margin-left: auto;
    display: flex;
    align-items: center;
    gap: 13px;
}

.sun {
    width: 25px;
    height: 25px;
    border-radius: 50%;
    background: linear-gradient(160deg, #ffc21a, #ee7a12);
}

.tray {
    display: flex;
    margin-left: 24px;
}

.tray .tool {
    width: 30px;
}

.tray svg {
    width: 20px;
    height: 20px;
}

.tray .tool:first-child svg {
    width: 17px;
    height: 17px;
}

.lang {
    margin: 0 12px 0 8px;
    font-size: 15px;
}

.clock {
    display: grid;
    text-align: center;
    font-size: 14px;
    line-height: 23px;
}

.notify {
    position: relative;
    width: 60px;
    height: 40px;
    margin-right: 10px;
    padding: 8px 0 0 18px;
}

.notify svg {
    width: 20px;
    height: 20px;
}

.notify span {
    position: absolute;
    left: 27px;
    top: 15px;
    width: 22px;
    height: 22px;
    line-height: 20px;
    border: 1px solid #888;
    border-radius: 11px;
    background: #272f40;
    font-size: 12px;
}
```

FILE: script.js
```js
// Icon drawings, all on a 30x30 grid
const bead = (x, y, r = 2.5) => `<circle cx="${x}" cy="${y}" r="${r}" fill="#8fc8ec"/>`;
const line = (d, c = "#bbb", w = 1.5) => `<path d="${d}" fill="none" stroke="${c}" stroke-width="${w}"/>`;
const fill = (d, c) => `<path d="${d}" fill="${c}"/>`;
const ball = (c, edge = "#ccc") => `<circle cx="15" cy="15" r="12" fill="${c}" stroke="${edge}"/><ellipse cx="11" cy="9" rx="5" ry="3" fill="#fff" opacity=".7"/>`;
const gumball = (a, b, c) => line("M15 12Q3 8 5 18Q6 23 13 28M15 12V4", a, 2) + fill("M11 7l4-6 4 6z", b) + line("M15 12Q27 8 25 18Q24 23 17 28", c, 2) + line("M4 22v6h6M26 22v6h-6", c, 1.5) + fill("M7 9h7v2H7z", b);
const corners = (c = "#eee") => line("M3 8V3h5M22 3h5v5M27 22v5h-5M8 27H3v-5", c, 1.5);
const chain = line("M13 12H9a3 3 0 0 0 0 6h4M17 12h4a3 3 0 0 1 0 6h-4M11 15h8", "#ddd", 2);
const loop = (x) => `<path d="M5 22V6h20v15h-6" fill="none" stroke="#f7cc10" stroke-width="4"/><path d="M20 16l-5 5 5 5z" fill="#f7cc10"/>${x}`;

const icons = {
    matrix: fill("M0 0h30v30H0z", "#42b55c") + line("M3 24C8 20 14 6 16 4L11 24 23 5 19 19Q20 25 27 18M3 13Q8 12 12 6", "#fff", 2),
    ring: `<circle cx="15" cy="15" r="11" fill="none" stroke="#0b3fb8" stroke-width="5"/><circle cx="15" cy="15" r="11" fill="none" stroke="#5f95ff" stroke-width="2"/>`,
    rings: `<ellipse cx="9" cy="8" rx="7" ry="4" fill="none" stroke="#2f6de8" stroke-width="3"/><ellipse cx="21" cy="17" rx="7" ry="4" fill="none" stroke="#2f6de8" stroke-width="3"/>` + line("M5 15q6-6 12-3M13 11q-6 5-6 17M15 13l4 15", "#c8d8ea", 2),
    band: fill("M4 4Q15-2 26 4L29 16Q25 29 15 29T1 16z", "#0c3fc4") + line("M5 5Q15 0 25 5", "#8ab4ff", 2) + `<circle cx="15" cy="16" r="9" fill="#777" stroke="#ddd" stroke-width="2"/><circle cx="15" cy="16" r="5" fill="#999" stroke="#fff"/>`,
    swirl: `<ellipse cx="15" cy="19" rx="12" ry="7" fill="none" stroke="#1c4fd6" stroke-width="4"/>` + line("M4 17L18 4q8 0 8 7l-3 4", "#6fa0ff", 3),
    lines4: line("M3 15q4-9 14-9M3 15h20M14 18l-5 11M16 18l6 11", "#7eb0f0", 2) + line("M24 2l-5 8h9M25 2v13", "#fff", 2.5),
    scale: line("M2 4h15M16 4L5 22M16 4l10 18M16 4v4", "#4d8bff", 2) + `<ellipse cx="15" cy="23" rx="13" ry="6" fill="#1347d2" stroke="#6ea3ff"/><ellipse cx="15" cy="21" rx="7" ry="2" fill="#4e96ff"/>` + line("M13 12h8", "#ccc", 2),
    ringframe: corners() + `<circle cx="15" cy="15" r="9" fill="none" stroke="#4f8af0" stroke-width="3"/>`,
    shield: fill("M3 4Q14-2 22 3L25 12 17 28Q4 26 2 12z", "#1246cc") + fill("M15 8q6 0 8-3 2 3 6 3 0 12-7 16-7-4-7-16z", "#e5dfd0"),
    book: fill("M4 5l17-3 4 3v22l-18 1-3-3z", "#123fb4") + line("M5 6l16-3", "#9dbdf5", 2) + `<circle cx="15" cy="19" r="4" fill="none" stroke="#cde" stroke-width="2"/>` + line("M12 10h6l-3 4z", "#cde", 1.5),
    bookS: fill("M4 5l17-3 4 3v22l-18 1-3-3z", "#123fb4") + line("M5 6l16-3", "#9dbdf5", 2) + line("M19 10q-7-3-7 2 7 3 6 7-2 5-7 2", "#cde", 2),
    plus: line("M15 3v24M4 15h22", "#ee477b", 4),
    plusbox: line("M17 3v24M6 14h22", "#ee477b", 4) + `<path d="M4 18h9v9H4z" fill="#f3a5e0" stroke="#333"/>` + line("M8.500 19v7M5 22.500h7", "#222", 1.5),
    minusplus: line("M1 15h13", "#eee", 3) + line("M20 5v20M12 15h17", "#ee477b", 3),
    arch: line("M6 18Q6 5 15 5T25 18", "#ddd", 2) + line("M6 15v10M1 20h9M25 15v10M20 20h9", "#ee477b", 3),
    target: corners("#bbb") + line("M15 6q-9 1-9 9t9 9q9-1 9-9t-9-9M15 3v24M6 22l18-14", "#b03063", 2) + line("M10 10l10 10M20 10L10 20", "#111", 2),
    linkbox: `<path d="M4 3h22v21H4z" fill="#15305e" stroke="#7ab0f0" stroke-width="2"/>` + chain + line("M3 21h11v7M3 21v6h6", "#f2c914", 2),
    linkbox2: `<path d="M4 4h22v22H4z" fill="#1b2838" stroke="#7ab0f0" stroke-width="2"/>` + chain,
    breaklink: `<path d="M4 4h22v22H4z" fill="#1b2838" stroke="#7ab0f0" stroke-width="2"/>` + line("M15 1v28M12 11H9a3 3 0 0 0 0 8h3M18 11h3a3 3 0 0 1 0 8h-3", "#fff", 2),
    pattern: `<path d="M2 2h26v26H2z" fill="#b80abf" stroke="#ff3cff" stroke-width="2"/>` + fill("M4 5q9-3 9 3t8-2l4 6q-8 6-11-1t-9 3zM6 20q8-5 9 3l-8 5zM18 18l9-1-2 9z", "#231150"),
    check: fill("M2 17l5-4 4 5L26 2l2 3-15 23z", "#2c64ea"),
    person: `<circle cx="8" cy="6" r="4" fill="#ddd"/>` + fill("M2 9l6 3 9-6-5 9 5 12h-4l-4-8-5 8H1l4-11z", "#ddd") + `<path d="M17 11h11v11H17z" fill="#3e72d8" stroke="#fff"/>` + line("M20 11v11M24 11v11M17 15h11M17 18h11", "#fff", 1),
    head: `<ellipse cx="15" cy="12" rx="10" ry="11" fill="#c9ccd3"/><ellipse cx="18" cy="14" rx="6" ry="3" fill="#25418f"/><ellipse cx="16" cy="26" rx="8" ry="3" fill="#1432a0"/>`,
    cubes: fill("M8 4l5-2 5 2v9l-5 2-5-2zM1 18l5-2 5 2v9l-5 2-5-2zM18 13l5-2 6 2v9l-6 2-5-2z", "#5788ce") + fill("M8 4l5-2 5 2-5 2zM1 18l5-2 5 2-5 2zM18 13l5-2 6 2-6 2z", "#b8d4f5"),
    curvept: line("M1 7Q26 0 26 28", "#83b2f5", 3) + bead(13, 4) + bead(26, 17),
    offset: line("M2 3h24v24", "#eee", 1.5).replace("/>", ' stroke-dasharray="3 2"/>') + line("M2 9Q20 10 20 28", "#83b2f5", 3),
    mirror: fill("M4 4q6 6 2 10-2 5 1 8l-3 6h9V3z", "#6fa5e8") + fill("M26 4q-6 6-2 10 2 5-1 8l3 6h-9V3z", "#a8cdf8") + line("M15 1v28", "#eee", 1.5),
    move: line("M15 4v22M4 15h22", "#cfe0ff", 3) + fill("M15 0l5 7H10zM15 30l5-7H10zM0 15l7-5v10zM30 15l-7-5v10z", "#88b3f5"),
    rotate: fill("M2 3h9v20H2z", "#1e4c9c") + fill("M8 21h20v7H8z", "#82b1f2") + line("M14 5q10 0 11 12M21 13l4 5 4-5", "#eee", 2),
    burst: fill("M2 28L1 9l7 10L13 1l2 15L27 4l-7 15 10-1-14 10z", "#8dbbf8"),
    cut: `<path d="M4 4h14v22H4z" fill="#161c26" stroke="#6fa5e8" stroke-width="2"/>` + fill("M18 4h9v10h-9z", "#1e4c9c") + line("M14 11l6 13M20 11l-6 13", "#fff", 2) + `<circle cx="13" cy="26" r="2.500" fill="none" stroke="#fff"/><circle cx="21" cy="26" r="2.500" fill="none" stroke="#fff"/>`,
    ring2: `<circle cx="15" cy="15" r="11" fill="#1c1b1b" stroke="#2c64dc" stroke-width="5"/><circle cx="15" cy="15" r="11" fill="none" stroke="#8eb8ff" stroke-width="2"/>`,
    grid: line("M4 4h22v22H4zM9 4v22M14 4v22M20 4v22M4 9h22M4 15h22M4 21h22", "#dce8ff", 1) + line("M14 4v12", "#1430c0", 2) + line("M14 16h13", "#d02020", 2),
    cross3d: fill("M11 3h8v6h7v7h-7v11h-8V16H4V9h7z", "#d98a35") + fill("M13 4h3v22h-3z", "#ffe0a8"),
    sphere: ball("#1f33c4", "#113"), sphereP: ball("#2a3ed8", "#d020c0"), sphereW: corners() + ball("#2d8ab8", "#234") + fill("M10 8l7 2-1 6-7 3zM19 14l6 2-4 6z", "#8fc4dc"),
    gridG: `<path d="M4 4h22v22H4z" fill="#1fae2c" stroke="#fff" stroke-width="2"/>` + line("M15 4v22M4 15h22", "#222", 2) + line("M15 15h9", "#e02020", 2),
    ballS: ball("#8d999c") + fill("M3 16h24v-4H3z", "#444"), ballY: ball("#b9b07a") + fill("M4 18q8-8 22-3l-2-3q-12-4-20 3z", "#e7bf2d"),
    ballB: ball("#3a5382", "#345"), ballW: ball("#52698f", "#9ab") + line("M6 20L22 6M5 11l20 10M15 3v24", "#cdd9ea", 1), ballG: ball("#d3b32d") + fill("M3 16h24v-4H3z", "#5a4508"),
    s1: line("M11 3v24M3 19h24M11 11h9v8", "#999") + bead(11, 19), s2: line("M2 13h26M10 12q14 2 15 15", "#999") + bead(10, 13), s3: line("M15 3v24M3 15h24", "#999") + bead(15, 15),
    s4: bead(15, 15), s5: line("M14 22h12", "#999") + bead(9, 9) + bead(9, 22), s6: `<circle cx="15" cy="15" r="10" fill="none" stroke="#889"/>` + bead(15, 5) + bead(25, 15) + bead(15, 25) + bead(5, 15),
    s7: `<circle cx="15" cy="15" r="10" fill="none" stroke="#999" stroke-width="2"/>` + bead(15, 15), s8: line("M3 15h24", "#999") + bead(15, 15), s9: line("M5 15h22", "#999") + bead(7, 15),
    t1: line("M5 5h20v20H5zM15 5v20M5 15h20", "#ccc") + bead(11, 18, 4), t2: fill("M5 8l12-4 9 4v16l-11 4-10-4z", "#888") + fill("M5 8l12-4 9 4-11 4z", "#bbb") + bead(9, 20, 4), t3: line("M4 26L26 4", "#bbb", 2) + bead(15, 15, 4) + `<path d="M2 23h5v5H2zM23 2h5v5h-5z" fill="#eee"/>`,
    t4: line("M6 26L25 5", "#ddd").replace("/>", ' stroke-dasharray="2 2"/>') + line("M6 26h20", "#ddd") + line("M6 4l-4 6h6M7 4v9M15 4h-4v4q5 0 3 5h-3", "#111", 1.5) + bead(25, 5, 4), t5: fill("M2 16l13-7 13 7-13 7z", "#ccc") + bead(15, 16, 4), t6: line("M18 2v14", "#ccc").replace("/>", ' stroke-dasharray="2 2"/>') + line("M3 16L27 8", "#16239c", 2) + line("M3 16l23 9", "#c02020", 2) + bead(18, 15, 4),
    hash: line("M9 3v24M21 3v24M3 9h24M3 21h24", "#111", 2) + line("M14 4v22M4 16h22", "#ccc", 1) + bead(15, 15, 4),
    gears: fill("M2 5h24v18H2z", "#0d1424") + line("M12 15m-5 0a5 5 0 1 0 10 0a5 5 0 1 0-10 0M12 6v4M12 20v4M3 15h4M17 15h4M6 9l2 2M18 9l-2 2", "#fff", 2.5) + `<circle cx="24" cy="23" r="4" fill="none" stroke="#ddd" stroke-width="2"/>`,
    wrench: fill("M2 5h24v18H2z", "#0d1424") + line("M12 12l16 16", "#eee", 4) + line("M12 5q-7 1-6 7 4 4 8 2 4-4 1-7l-3 3", "#eee", 3),
    boxline: fill("M4 10l11-5 12 5v12l-12 5-11-5z", "#3f6cb4") + fill("M4 10l11-5 12 5-12 5z", "#8bb2e8") + fill("M1 17h28v4H1z", "#c6daf5"),
    boxdoc: fill("M1 1h22v20H1z", "#b8cce8") + fill("M9 11l10-4 10 4v14l-10 4-10-4z", "#4c7ac4") + fill("M9 11l10-4 10 4-10 4z", "#8db5ee"),
    scroll: fill("M7 3h19v5h-4v18q-9 4-18 0l3-2z", "#9dbde8") + line("M10 9h9M10 13h9M10 17h9M10 21h9", "#1f3c74", 1.5), notepad: fill("M3 3h20v25H3z", "#c2cbe0") + line("M5 8h15M5 12h12M5 17h8", "#557", 1) + line("M12 22L27 5", "#5a8fe0", 5) + fill("M9 25l2-5 4 4z", "#fff"),
    cubeP: fill("M3 10L16 2l12 3-1 16-14 7L2 23z", "#2c4494") + line("M4 10L16 2l12 3-2 16-14 7L2 22z", "#b82bb0", 2) + fill("M11 14l8-4 4 3v8l-7 3-5-2z", "#6a92e0"),
    panes: line("M3 4h24v20H3zM15 4v20M3 14h24", "#222", 1) + fill("M3 4h11v9H3zM16 4h11v9H16zM3 15h11v9H3zM16 15h11v9H16zM6 26h18v2H6z", "#b9c5dd"), monitor: fill("M6 6h18v13H6z", "#aeb1b2") + line("M5 5h20v15H5z", "#456", 1) + fill("M10 22h12v3H10z", "#456"),
    cubeW: fill("M5 9l12-5 9 6-2 14-11 3-8-5z", "#2d5ca8") + line("M4 9l13-6 10 7-3 15-11 3-9-6zM4 9l10 4 13-3M14 13l-1 15", "#ddd"), bookB: fill("M6 5l16-3 3 2v21l-16 3-3-3z", "#2d5fd0") + fill("M6 5l16-3v3L9 7z", "#dbe6ff"),
    filter: line("M3 27v-5M3 27h5M22 3h5v5", "#ddd") + fill("M4 10q11-5 22 0l-8 8v9l-5-3v-6z", "#6c98dc"), nodes: line("M5 5l18 20M7 24h14", "#ccc").replace("/>", ' stroke-dasharray="2 2"/>') + line("M3 3h4v4H3zM3 22h4v4H3zM20 22h4v4h-4z", "#fff") + line("M16 10l4 5 8-10", "#fff", 2), report: fill("M5 3h21v26H5z", "#d5def0") + fill("M7 6h8v9H7z", "#24355c") + line("M17 7h7M17 11h7M8 19h15M8 23h15", "#24355c", 1.5),
    brush: fill("M4 26l8-9 7 7z", "#f0ad42") + line("M6 3l9 14M13 5l4 11 8 2M18 20l10 5", "#bbb", 4), play: loop(fill("M3 13h10v12H3z", "#ddd") + fill("M6 15l5 4-5 4z", "#111")), rec: loop(fill("M3 13h10v12H3z", "#ddd") + `<circle cx="8" cy="19" r="3" fill="#e02020"/>`), delx: loop(line("M2 14l11 11M13 14L2 25", "#e01818", 4)),
    gum1: gumball("#b02573", "#d03a92", "#d08aa8"), gum2: corners() + gumball("#d03030", "#f2b21c", "#36c6c6"), gum3: gumball("#d03030", "#f2b21c", "#36c6c6") + line("M22 3h6M25 0v6", "#eee", 1), gum4: gumball("#e06ca0", "#f2b21c", "#7ce0f0"),
    alarm: line("M3 6l6-5M27 6l-6-5M6 25l-3 4M24 25l3 4", "#555f6b", 4) + `<circle cx="15" cy="15" r="11" fill="#fff" stroke="#d02626" stroke-width="4"/>` + line("M15 8v8l4 4", "#222", 2.5),
    camera: fill("M1 5h7l2-3h10l2 3h7v6H1z", "#9fb0b8") + fill("M1 10h28v17H1z", "#6a3fb8") + `<circle cx="15" cy="16" r="7" fill="#b58af0" stroke="#432a7c" stroke-width="2"/>`,
    speaker: fill("M0 10h7l9-7v24l-9-7H0z", "#607d8b") + line("M19 7q6 8 0 16M23 3q9 12 0 24", "#3ca0cc", 3), mic: `<rect x="10" y="1" width="10" height="18" rx="5" fill="#9ba6ad"/>` + line("M6 12q0 11 9 11t9-11M15 23v5M10 28h10", "#9ba6ad", 2) + fill("M14 9h3v3h-3z", "#d33"), webcam: `<circle cx="15" cy="14" r="12" fill="#607d8b"/><circle cx="15" cy="14" r="8" fill="#1565c0"/><circle cx="15" cy="14" r="6" fill="#42a5f5"/>` + fill("M8 28h14l-3-3h-8z", "#607d8b"),
    pencil: line("M9 22L26 4", "#2a98bd", 7) + fill("M2 29l3-11 7 7z", "#f2b7a5"), cursor: fill("M9 2v22l5-5 4 9 4-2-4-8h7z", "#ddd"), frame: line("M3 9V3h6M21 3h6v6M27 21v6h-6M9 27H3v-6", "#eee", 3), eye: line("M1 15Q15-2 29 15Q15 32 1 15z", "#fff", 2.5) + `<circle cx="15" cy="15" r="7" fill="#fff"/><circle cx="15" cy="15" r="4" fill="#181c2c"/>`,
    folder: fill("M2 4h10l3 4h12v19H2z", "#ffa000") + fill("M6 12h24l-4 15H2z", "#ffc107"), gear: `<circle cx="15" cy="15" r="8" fill="none" stroke="#607d8b" stroke-width="6"/>` + line("M15 0v6M15 24v6M0 15h6M24 15h6M4 4l5 5M21 21l5 5M26 4l-5 5M9 21l-5 5", "#607d8b", 5), minus: line("M5 22h20", "#607d8b", 4), cross: line("M6 6l18 18M24 6L6 24", "#d83a10", 3),
    taskview: line("M4 1v5h15V1M4 29v-5h15v5M4 10h15v10H4zM25 1v9M25 19v10", "#fff", 2) + fill("M23 12h4v5h-4z", "#fff"),
    copilot: fill("M8 4q3-3 8-2l3 3-6 19q-2 3-6 2-6-1-5-7z", "#2aa3d8") + fill("M5 14l7-5-3 14q-6 2-7-4z", "#c5c93a") + fill("M22 27q-3 2-8 1l-3-3 7-16q2-3 6-2 5 1 4 7z", "#e86a8e") + fill("M18 3q6-1 6 5l-4 1-3 9-3 1z", "#6855d8"),
    edge: `<circle cx="15" cy="15" r="14" fill="#1878d4"/>` + fill("M1 13Q4 0 17 1q12 2 12 13 0 6-7 6-6 0-5-3 3-6-4-8-7-1-12 4z", "#3fc6a4") + fill("M9 16q2-5 8-4 2 2 0 5 0 6 10 5-4 7-11 7-7-4-7-13z", "#0e4c97"),
    explorer: fill("M1 3h11l3 4h14v19H1z", "#f6cb5a") + fill("M1 3h11v5H1z", "#d89a1e") + fill("M6 27V15h18v12h-5v-5h-8v5z", "#3f98dc"),
    wow: `<circle cx="15" cy="15" r="13" fill="#2b1a0c" stroke="#a87c2c" stroke-width="2"/>` + line("M7 8l4 15 4-12 4 12 4-15", "#f4c24a", 3), outlook: fill("M1 12L15 1l14 11v17H5q-4-2-4-6z", "#2f86e8") + fill("M15 1l7 5L6 17z", "#9cd2fa") + fill("M9 24L29 12v17H9z", "#1b55c4") + fill("M1 15h12v12H1z", "#1246a8") + `<circle cx="7" cy="21" r="3" fill="none" stroke="#fff" stroke-width="2"/>`,
    store: line("M9 7V2h12v5", "#2ba4e0", 2) + `<rect x="1" y="6" width="28" height="24" rx="2" fill="#f4f4f4"/>` + fill("M10 12h5v5h-5z", "#f25022") + fill("M16 12h5v5h-5z", "#7fba00") + fill("M10 18h5v5h-5z", "#00a4ef") + fill("M16 18h5v5h-5z", "#ffb900"),
    whatsapp: line("M3 27l2-7Q0 8 10 3q12-4 17 7 2 12-9 16-6 1-9-1z", "#25c45e", 3) + fill("M9 9q2-3 4 0l1 3-2 2q2 4 5 5l2-2 4 2q0 4-4 4-9-2-10-14z", "#25c45e"),
    telegram: `<circle cx="15" cy="15" r="13" fill="#2b9fdb"/>` + fill("M6 15l17-7-3 16-5-4-3 3-1-5 9-7-11 6z", "#fff"),
    chrome: `<circle cx="15" cy="15" r="14" fill="#f9c716"/>` + fill("M3 8Q8 1 15 1t12 7H15L9 18z", "#e33b2e") + fill("M3 8l6 11 6 4-1 6Q4 28 1 18q-1-5 2-10z", "#2fa34c") + `<circle cx="15" cy="15" r="7" fill="#fff"/><circle cx="15" cy="15" r="5.500" fill="#377fe8"/>`,
    up: line("M4 20L15 9l11 11", "#fff", 2), battery: fill("M9 10h17v13H9z", "#fff") + line("M12 7h16v19H7V12M28 13h2v6h-2M2 4v5h7V4M5 9v6", "#fff", 1.5), wifi: line("M3 27Q3 6 27 3M9 27Q9 12 27 9M15 27Q15 17 27 15", "#ddd", 2) + `<circle cx="23" cy="24" r="3" fill="#fff"/>`, volume: line("M2 11h5l7-6v20l-7-6H2zM18 11q3 4 0 8M22 8q6 7 0 14", "#fff", 1.7) + line("M26 5q8 10 0 20", "#8a93a5", 1.5)
};

const draw = name => `<svg viewBox="0 0 30 30">${icons[name]}</svg>`;

document.querySelectorAll("[data-icon]").forEach(el => {
    el.innerHTML = draw(el.dataset.icon);
});

// "name*state" gives the button an extra class
document.querySelectorAll("[data-icons]").forEach(el => {
    el.innerHTML = el.dataset.icons.split(" ").map(item => {
        const [name, state = ""] = item.split("*");
        const badge = name === "whatsapp" ? '<span class="badge">1</span>' : "";
        return `<button class="tool ${state}" aria-label="${name}">${draw(name)}${badge}</button>`;
    }).join("");
});

// Tool categories
const categories = [
    [["Curve", "#c9a92b"], ["Surface", "#2d8a68"], ["Solid", "#7a1fe0"], ["Transform", "#e0441c"], ["SubD", "#e83a1c"], ["Art", "#c9c92b"]],
    [["Builder", "#c42020"], ["Tools", "#5a48d8"], ["Gems", "#3c78b8"], ["Setting", "#c020a8"], ["Cutters", "#ea6a14"], ["Render", "#18a888"]]
];
document.getElementById("categories").innerHTML = categories.map(row => `<div class="cat-row">${row.map(([name, color]) =>
    `<a href="#" class="cat ${name === "Art" ? "end" : ""}"><span class="dot" style="background:${color}"></span>${name}</a>`).join("")}</div>`).join("");

// Layers
const lock = '<svg viewBox="0 0 12 12"><path d="M2 6h9v6H2z" fill="#ddd"/><path d="M5 6V2q3-3 5 0v1" fill="none" stroke="#ddd" stroke-width="1.5"/></svg>';
const layerRow = ([name, color], selected = "") => `<div class="layer"><span class="layer-name ${selected}">${name}</span><div class="layer-controls">
    <button class="go" aria-label="${name} menu"></button><button class="swatch" aria-label="${name} color" style="background:${color}"></button>
    <button class="lock" aria-label="${name} lock">${lock}</button><button class="on-switch" aria-label="${name} visible"></button></div></div>`;

const layersTop = [
    [["Metal 01", "#007a58"], ["Metal 02", "#45bd68"], ["Metal 03", "#82fa76"], ["Metal 04", "#c5ffbe"]],
    [["User 01", "#ff0000"], ["User 02", "#00ff00"], ["User 03", "#0000ff"], ["User 04", "#808080"]],
    [["Gem 01", "#0038a0"], ["Gem 02", "#3e78cc"], ["Gem 03", "#82b4ff"], ["Gem 04", "#b4d2ff"]],
    [["Heads", "#7a18a8"], ["Finger", "#ac3838"], ["Cutting", "#ff7800"], ["Creation", "#ffb81c"]]
];
const layersBottom = [
    [["User 17", "#ff8088"], ["User 18", "#f2a866"], ["User 19", "#f2d078"], ["User 20", "#c4d85c"]],
    [["User 21", "#3c6448"], ["User 22", "#38607a"], ["User 23", "#383868"], ["User 24", "#603458"]],
    [["User 25", "#a8fff0"], ["User 26", "#30ffe0"], ["User 27", "#00bfb4"], ["User 28", "#007c84"]],
    [["User 29", "#ecd4b4"], ["User 30", "#b8a074"], ["User 31", "#8c703c"], ["User 32", "#6c4808"]]
];
const groups = list => list.map(g => `<div class="layer-group">${g.map(l => layerRow(l)).join("")}</div>`).join("");
document.getElementById("lights").innerHTML = layerRow(["Lights", "#ffffff"], "selected");
document.getElementById("layers-top").innerHTML = groups(layersTop);
document.getElementById("layers-bottom").innerHTML = groups(layersBottom);

// Metal weights table
const metals = [
    ["Yellow Gold:9KY", "7.68", "4.94", "11.08"], ["Yellow Gold:10KY", "7.93", "5.10", "11.45"], ["Yellow Gold:14KY", "8.92", "5.74", "12.88"],
    ["Yellow Gold:18KY", "10.68", "6.87", "15.41"], ["Yellow Gold:18KY R...", "10.68", "6.87", "15.41"], ["Yellow Gold:22KY", "12.40", "7.97", "17.89"],
    ["White Gold:9K PdW", "8.72", "5.61", "12.59"], ["White Gold:10KX1", "7.75", "4.98", "11.18"], ["White Gold:10KW", "7.61", "4.90", "10.99"],
    ["White Gold:14KX1", "8.74", "5.62", "12.61"], ["White Gold:14K PdW", "9.96", "6.40", "14.37"]
];
document.getElementById("metals").innerHTML = metals.map(row => `<tr>${row.map(v => `<td>${v}</td>`).join("")}</tr>`).join("");

// Object snaps
const checked = ["End", "Near", "Mid", "Quad"];
const snaps = ["End", "Near", "Point", "Mid", "Cen", "Int", "Perp", "Tan", "Quad", "Knot", "Vertex", "Project", "Disable"];
document.getElementById("osnap").innerHTML = snaps.map(s =>
    `<label class="${s.toLowerCase()}"><input type="checkbox" ${checked.includes(s) ? "checked" : ""}>${s}</label>`).join("");

// Bead chain of the bracelet
let beads = '<path d="M969 620H1342V692H969z" fill="#004a33"/>';
for (let i = -1; i < 11; i++) {
    const x = 993 + i * 33.75;
    beads += `<path d="M${x + 12} 640l5-6 5 6-5 5zM${x + 12} 670l5-6 5 6-5 5zM${x + 14} 620h6l-3 6zM${x + 14} 692h6l-3-6z" fill="#000"/>`;
    beads += [[x, 632], [x, 680], [x + 14, 656]].map(([cx, cy]) => `<circle cx="${cx}" cy="${cy}" r="14" fill="url(#bead)" stroke="#0a7a56"/>`).join("");
}
document.getElementById("beads").innerHTML = beads;
```
